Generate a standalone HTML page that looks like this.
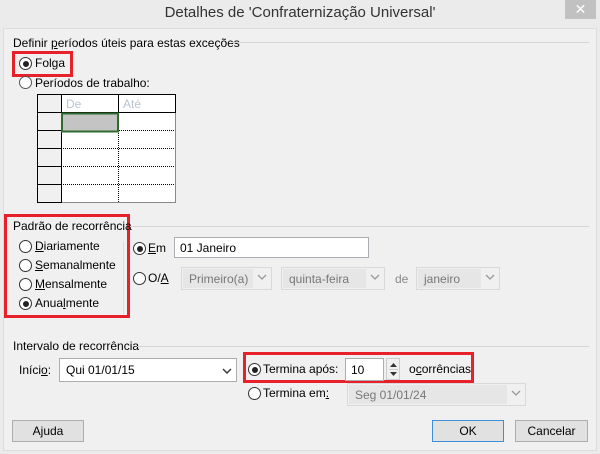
<!DOCTYPE html>
<html><head><meta charset="utf-8"><style>
*{margin:0;padding:0;box-sizing:border-box}
body{width:600px;height:454px;background:#ebebeb;font-family:"Liberation Sans",sans-serif;font-size:12px;color:#000;position:relative;overflow:hidden}
.a{position:absolute;white-space:nowrap}
.t{line-height:14px}
.r{position:absolute;width:13px;height:13px;border:1px solid #333;border-radius:50%;background:#fff}
.r.on::after{content:"";position:absolute;left:2.5px;top:2.5px;width:6px;height:6px;border-radius:50%;background:#222}
.red{position:absolute;border:3px solid #e8202a}
.ln{position:absolute;height:1px;background:#d5d5d5}
.box{position:absolute;background:#fff;border:1px solid #abadb3}
.dis{position:absolute;background:#f0f0f0;border:1px solid #d9d9d9;color:#777}
.dis .in{position:absolute;left:1px;top:1px;bottom:1px;right:18px;background:#e6e6e6;padding:3px 6px}
.chev{position:absolute;right:4px;top:5px;width:10px;height:8px}
.btn{position:absolute;background:#e1e1e1;border:1px solid #adadad;text-align:center;line-height:20px}
u{text-decoration:underline}
</style></head><body>
<div class="a" style="left:0;top:4px;width:600px;text-align:center;font-size:15px;color:#333">Detalhes de 'Confraternização Universal'</div>
<div class="a" style="left:565px;top:0;width:31px;height:19px;background:#c1c1c1;color:#fff;text-align:center;font-size:14px;line-height:18px">✕</div>
<div class="a" style="left:3px;top:28px;width:594px;height:423px;background:#f0f0f0;border:1px solid #dcdcdc"></div>

<div class="a t" style="left:13px;top:36px">Definir <u>p</u>eríodos úteis para estas exceções</div>
<div class="ln" style="left:232px;top:42px;width:357px"></div>
<div class="red" style="left:12px;top:51px;width:61px;height:26px"></div>
<div class="r on" style="left:19px;top:57px"></div>
<div class="a t" style="left:35px;top:56px">Folga</div>
<div class="r" style="left:19px;top:76px;border-color:#555"></div>
<div class="a t" style="left:35px;top:76px">Períodos de trabalho:</div>

<svg class="a" style="left:37px;top:94px" width="140" height="110">
<rect x="0.5" y="0.5" width="138" height="108" fill="#fff" stroke="#888"/>
<rect x="0" y="0" width="24" height="109" fill="#f0f0f0"/>
<line x1="24.5" y1="0" x2="24.5" y2="109" stroke="#000"/>
<line x1="81.5" y1="0" x2="81.5" y2="19" stroke="#000"/>
<line x1="138.5" y1="0" x2="138.5" y2="19" stroke="#000"/>
<line x1="0" y1="0.5" x2="139" y2="0.5" stroke="#000"/>
<line x1="0" y1="18.5" x2="139" y2="18.5" stroke="#000"/>
<line x1="0.5" y1="0" x2="0.5" y2="109" stroke="#000"/>
<g stroke="#000"><line x1="0" y1="36.5" x2="24" y2="36.5"/><line x1="0" y1="54.5" x2="24" y2="54.5"/><line x1="0" y1="72.5" x2="24" y2="72.5"/><line x1="0" y1="90.5" x2="24" y2="90.5"/><line x1="0" y1="108.5" x2="24" y2="108.5"/></g>
<g stroke="#000" stroke-dasharray="1,1"><line x1="24" y1="36.5" x2="138" y2="36.5"/><line x1="24" y1="54.5" x2="138" y2="54.5"/><line x1="24" y1="72.5" x2="138" y2="72.5"/><line x1="24" y1="90.5" x2="138" y2="90.5"/><line x1="81.5" y1="19" x2="81.5" y2="109"/></g>
<rect x="25" y="19.5" width="56" height="18" fill="#c4c4c4" stroke="#2e6b2e" stroke-width="2"/>
<text x="29" y="14" font-size="12" fill="#b8c4d0" font-family="Liberation Sans">De</text>
<text x="86" y="14" font-size="12" fill="#b8c4d0" font-family="Liberation Sans">Até</text>
</svg>

<div class="red" style="left:4px;top:214px;width:126px;height:104px"></div>
<div class="a t" style="left:13px;top:219px">Padrão de recorrência</div>
<div class="ln" style="left:130px;top:226px;width:459px"></div>
<div class="a" style="left:123px;top:242px;width:1px;height:72px;background:#ddd"></div>
<div class="r" style="left:19px;top:240px"></div><div class="a t" style="left:35px;top:239px"><u>D</u>iariamente</div>
<div class="r" style="left:19px;top:259px"></div><div class="a t" style="left:35px;top:258px"><u>S</u>emanalmente</div>
<div class="r" style="left:19px;top:278px"></div><div class="a t" style="left:35px;top:277px"><u>M</u>ensalmente</div>
<div class="r on" style="left:19px;top:297px"></div><div class="a t" style="left:35px;top:296px">Anua<u>l</u>mente</div>

<div class="r on" style="left:133px;top:242px"></div><div class="a t" style="left:148px;top:241px"><u>E</u>m</div>
<div class="box" style="left:174px;top:237px;width:195px;height:21px;padding:3px 5px">01 Janeiro</div>
<div class="r" style="left:133px;top:272px"></div><div class="a t" style="left:148px;top:271px">O/<u>A</u></div>
<div class="dis" style="left:181px;top:267px;width:91px;height:23px"><div class="in">Primeiro(a)</div><svg class="chev" viewBox="0 0 10 8"><path d="M1 2l4 4 4-4" fill="none" stroke="#999" stroke-width="1.3"/></svg></div>
<div class="dis" style="left:281px;top:267px;width:104px;height:23px"><div class="in">quinta-feira</div><svg class="chev" viewBox="0 0 10 8"><path d="M1 2l4 4 4-4" fill="none" stroke="#999" stroke-width="1.3"/></svg></div>
<div class="a t" style="left:395px;top:272px;color:#888">de</div>
<div class="dis" style="left:416px;top:267px;width:84px;height:23px"><div class="in">janeiro</div><svg class="chev" viewBox="0 0 10 8"><path d="M1 2l4 4 4-4" fill="none" stroke="#999" stroke-width="1.3"/></svg></div>

<div class="a t" style="left:13px;top:339px">Intervalo de recorrência</div>
<div class="ln" style="left:137px;top:346px;width:452px"></div>
<div class="a t" style="left:19px;top:363px">Iníci<u>o</u>:</div>
<div class="box" style="left:59px;top:358px;width:178px;height:24px;padding:4px 6px;border-color:#adadad">Qui 01/01/15<svg class="chev" style="top:8px" viewBox="0 0 10 8"><path d="M1 2l4 4 4-4" fill="none" stroke="#333" stroke-width="1.4"/></svg></div>

<div class="red" style="left:243px;top:352px;width:231px;height:31px"></div>
<div class="r on" style="left:248px;top:363px"></div><div class="a t" style="left:263px;top:362px">Termina após:</div>
<div class="box" style="left:345px;top:358px;width:39px;height:23px;padding:4px 5px">10</div>
<div class="box" style="left:386px;top:358px;width:14px;height:22px;background:#f0f0f0;border-color:#ccc"><svg style="position:absolute;left:2px;top:2px" width="9" height="17"><path d="M1 6l3.5-4 3.5 4z M1 11l3.5 4 3.5-4z" fill="#333"/><line x1="0" y1="8.5" x2="9" y2="8.5" stroke="#ccc"/></svg></div>
<div class="a t" style="left:409px;top:362px">o<u>c</u>orrências</div>
<div class="r" style="left:248px;top:387px"></div><div class="a t" style="left:263px;top:386px">Termina em<u>:</u></div>
<div class="dis" style="left:347px;top:383px;width:179px;height:23px"><div class="in">Seg 01/01/24</div><svg class="chev" viewBox="0 0 10 8"><path d="M1 2l4 4 4-4" fill="none" stroke="#999" stroke-width="1.3"/></svg></div>

<div class="btn" style="left:12px;top:420px;width:72px;height:22px">A<u>j</u>uda</div>
<div class="btn" style="left:432px;top:420px;width:72px;height:22px;border-color:#3c8fd8">OK</div>
<div class="btn" style="left:515px;top:420px;width:73px;height:22px">Cancelar</div>
</body></html>
